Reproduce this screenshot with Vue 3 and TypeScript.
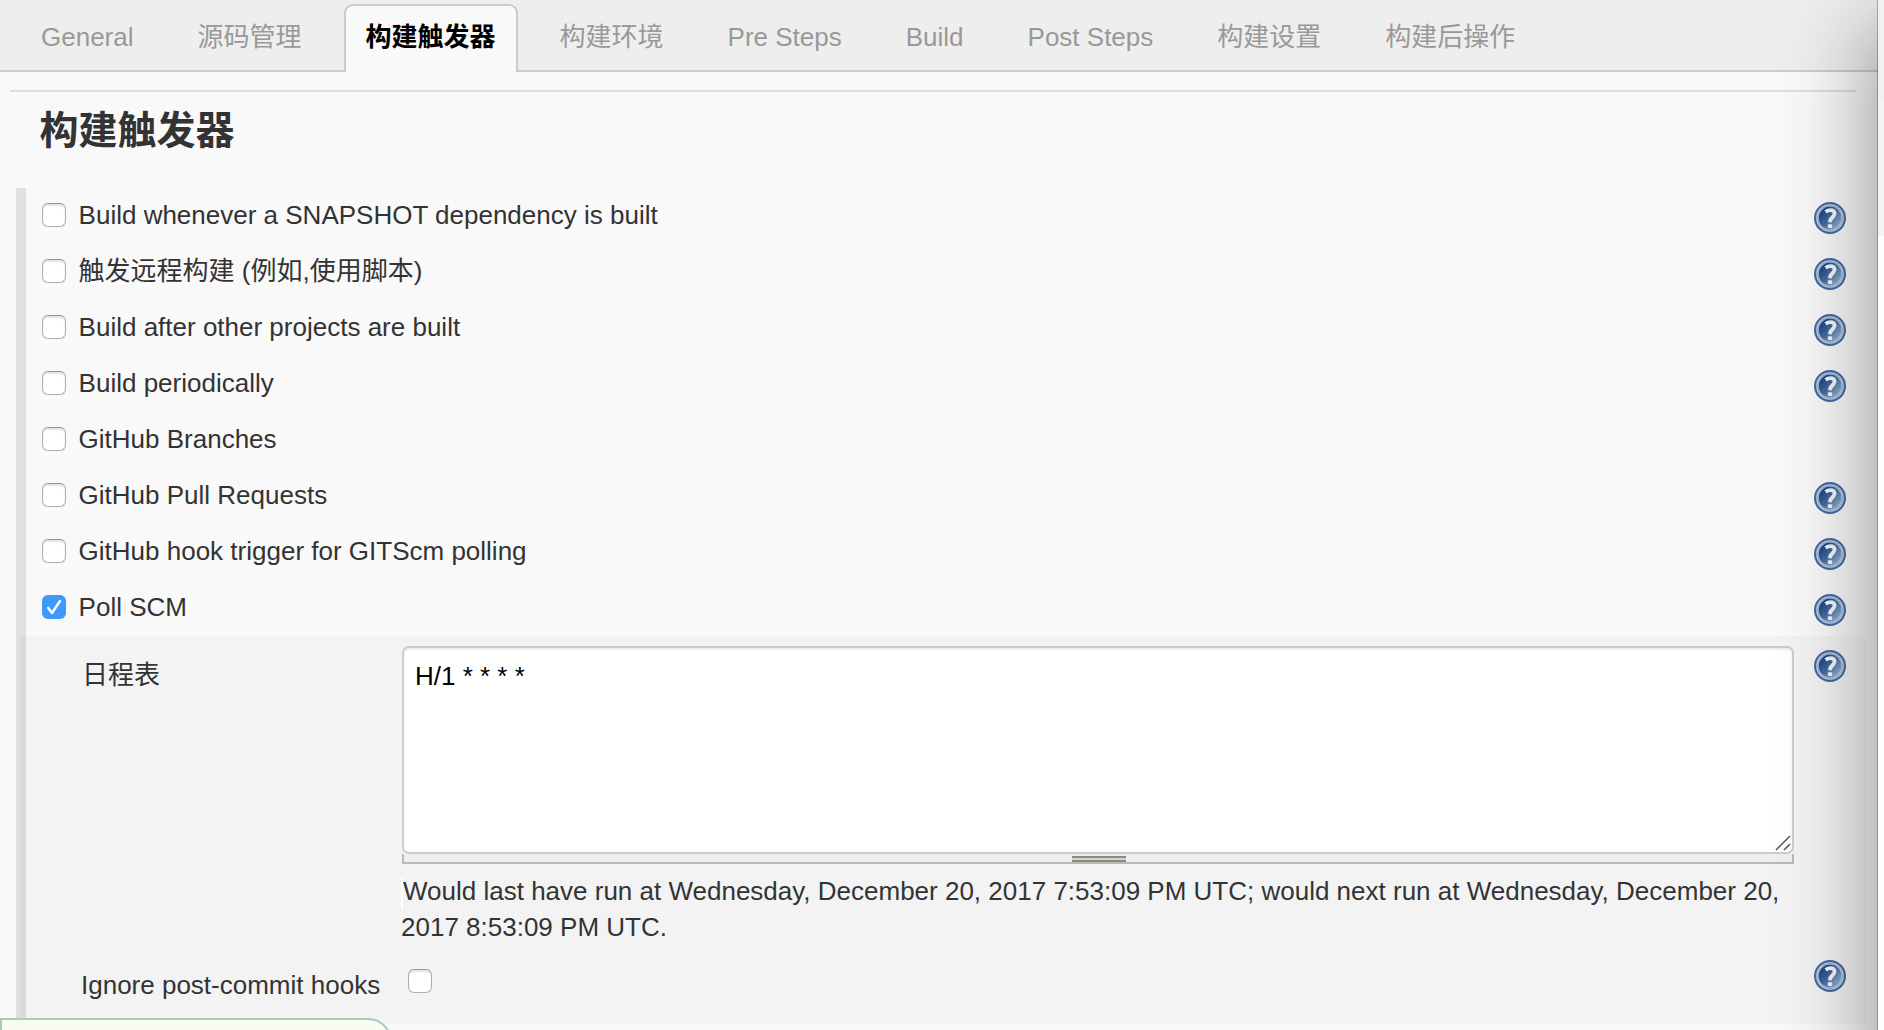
<script setup lang="ts">
import { ref } from 'vue'

interface Trigger {
  label: string
  checked: boolean
  help: boolean
}

const tabs: string[] = [
  'General',
  '源码管理',
  '构建触发器',
  '构建环境',
  'Pre Steps',
  'Build',
  'Post Steps',
  '构建设置',
  '构建后操作',
]
const activeTab = ref(2)

const triggers = ref<Trigger[]>([
  { label: 'Build whenever a SNAPSHOT dependency is built', checked: false, help: true },
  { label: '触发远程构建 (例如,使用脚本)', checked: false, help: true },
  { label: 'Build after other projects are built', checked: false, help: true },
  { label: 'Build periodically', checked: false, help: true },
  { label: 'GitHub Branches', checked: false, help: false },
  { label: 'GitHub Pull Requests', checked: false, help: true },
  { label: 'GitHub hook trigger for GITScm polling', checked: false, help: true },
  { label: 'Poll SCM', checked: true, help: true },
])

const schedule = ref('H/1 * * * *')
const ignoreHooks = ref(false)
</script>

<template>
  <div class="page">
    <svg class="defs" width="0" height="0" aria-hidden="true">
      <defs>
        <linearGradient id="disc" x1="0.1" y1="0.2" x2="0.9" y2="0.9">
          <stop offset="0" stop-color="#1f4583" />
          <stop offset="0.45" stop-color="#41699f" />
          <stop offset="1" stop-color="#9bb8d6" />
        </linearGradient>
        <symbol id="help" viewBox="0 0 32 32">
          <circle cx="16" cy="16" r="16" fill="#4469a3" />
          <circle cx="16" cy="16" r="13.8" fill="#d3dded" />
          <circle cx="16" cy="16" r="12.7" fill="#7f9ac2" />
          <circle cx="16" cy="16" r="12.1" fill="#c9d6e9" />
          <circle cx="16" cy="16" r="11.4" fill="url(#disc)" />
          <path d="M11.6 9.9C13.6 8.5 15 8.1 16.6 8.1c2.4 0 4 1.4 4 3.5 0 3.6-4.7 3.9-4.7 8.6" fill="none" stroke="#f2f5fa" stroke-width="3.9" />
          <rect x="13.8" y="22.2" width="4.4" height="3.9" rx="0.8" fill="#f2f5fa" />
        </symbol>
      </defs>
    </svg>

    <nav class="tabs">
      <a
        v-for="(tab, i) in tabs"
        :key="tab"
        class="tab"
        :class="{ active: i === activeTab }"
        @click="activeTab = i"
      >{{ tab }}</a>
    </nav>

    <main class="content">
      <h1 class="title">构建触发器</h1>

      <section class="group">
        <div v-for="t in triggers" :key="t.label" class="row">
          <label class="option">
            <input v-model="t.checked" type="checkbox" class="hidden-input" />
            <span class="box" :class="{ on: t.checked }">
              <svg v-if="t.checked" viewBox="0 0 24 24" width="24" height="24">
                <path d="M6.2 13l3.8 5 8-12" fill="none" stroke="#fff" stroke-width="2.4" stroke-linecap="round" stroke-linejoin="round" />
              </svg>
            </span>
            <span>{{ t.label }}</span>
          </label>
          <svg v-if="t.help" class="help"><use href="#help" /></svg>
        </div>

        <div class="nested">
          <div class="field">
            <div class="name">日程表</div>
            <div class="setting">
              <div class="area-wrap">
                <textarea v-model="schedule" class="area" spellcheck="false"></textarea>
                <svg class="corner" viewBox="0 0 16 16" width="16" height="16">
                  <path d="M1 15L15 1M9 15l6-6" stroke="#555" stroke-width="1.5" />
                </svg>
              </div>
              <div class="handle"><span class="grip"></span></div>
              <p class="note"><i class="spacer"></i>Would last have run at Wednesday, December 20, 2017 7:53:09 PM UTC; would next run at Wednesday, December 20, <br />2017 8:53:09 PM UTC.</p>
            </div>
            <svg class="help"><use href="#help" /></svg>
          </div>

          <div class="field ignore">
            <div class="name">Ignore post-commit hooks</div>
            <label class="setting">
              <input v-model="ignoreHooks" type="checkbox" class="hidden-input" />
              <span class="box"></span>
            </label>
            <svg class="help"><use href="#help" /></svg>
          </div>
        </div>
      </section>
    </main>

    <div class="save-bar"></div>
    <div class="shade"><div class="edge"></div></div>
  </div>
</template>

<style>
body {
  margin: 0;
  overflow: hidden;
}
</style>

<style scoped>
.page {
  position: relative;
  width: 1884px;
  height: 1030px;
  overflow: hidden;
  box-sizing: border-box;
  background: #f9f9f9;
  color: #333;
  font: 26px/36px "Liberation Sans", "Noto Sans CJK SC", sans-serif;
}
.page * {
  box-sizing: border-box;
}
.defs {
  position: absolute;
}
.tabs {
  display: flex;
  align-items: flex-end;
  gap: 20px;
  height: 72px;
  padding-left: 19px;
  background: linear-gradient(#ccc, #ccc) bottom / 100% 2px no-repeat #eee;
}
.tab {
  height: 68px;
  padding: 13px 20px 0;
  border: 2px solid transparent;
  border-bottom: 0;
  border-radius: 9px 9px 0 0;
  color: #999;
  white-space: nowrap;
}
.tab.active {
  border-color: #ccc;
  background: #f9f9f9;
  color: #000;
  font-weight: bold;
}
.content {
  width: 1846px;
  margin: 18px 0 0 10px;
  border-top: 2px solid #ddd;
}
.title {
  height: 96px;
  margin: 0;
  padding: 13px 0 0 29.5px;
  font-size: 39px;
  line-height: 52px;
}
.group {
  width: 1850px;
  margin-left: 6px;
  height: 836px;
  background: linear-gradient(#e0e0e0, #e0e0e0) left / 10px 100% no-repeat;
}
.row {
  display: flex;
  justify-content: space-between;
  height: 56px;
  padding: 14px 20px 0 26px;
}
.option {
  display: flex;
  align-items: flex-start;
  gap: 12.6px;
  height: 32px;
  line-height: 26px;
}
.hidden-input {
  display: none;
}
.box {
  display: block;
  flex: none;
  width: 24px;
  height: 24px;
  margin-top: 1px;
  border: 1px solid #b0b0b0;
  border-top-color: #959595;
  border-radius: 6px;
  background: #fff;
  box-shadow: inset 0 2px 2px #e4e4e4;
}
.box.on {
  border: 0;
  background: #3d99fb;
  box-shadow: none;
}
.box svg {
  display: block;
}
.help {
  flex: none;
  width: 32px;
  height: 32px;
}
.nested {
  width: 1846px;
  height: 388px;
  margin-left: 4px;
  background: rgba(0, 0, 0, 0.025);
}
.field {
  display: flex;
  height: 310px;
  padding: 14px 20px 0 62px;
}
.name {
  width: 320px;
  padding-top: 7px;
}
.setting {
  width: 1392px;
  margin-right: 20px;
}
.area-wrap {
  position: relative;
  height: 208px;
  margin-top: -4px;
}
.area {
  display: block;
  width: 100%;
  height: 100%;
  margin: 0;
  padding: 10px 11px;
  border: 2px solid #ccc;
  border-radius: 7px;
  outline: 0;
  resize: none;
  overflow: hidden;
  background: #fff;
  box-shadow: inset 0 2px 2px rgba(0, 0, 0, 0.07);
  color: #000;
  font: inherit;
}
.corner {
  position: absolute;
  right: 3px;
  bottom: 3px;
}
.handle {
  display: flex;
  justify-content: center;
  height: 10px;
  padding: 2px 0 0 2px;
  border: 2px solid #babbb2;
  border-top: 0;
  background: #eee;
}
.grip {
  width: 54px;
  height: 6px;
  background: linear-gradient(#8b8b83 0 2px, #d3d4cd 2px 4px, #8b8b83 4px 6px);
}
.note {
  margin: 10px 0 0 -1px;
  line-height: 35.5px;
  white-space: nowrap;
}
.spacer {
  display: inline-block;
  width: 2px;
  height: 32px;
  margin: 0;
  background: #fff;
  vertical-align: -10px;
}
.ignore {
  height: 78px;
}
.ignore .name {
  width: 326px;
  padding-top: 7px;
  text-indent: -1px;
}
.ignore .setting {
  width: 1386px;
  padding-top: 8px;
}
.save-bar {
  position: absolute;
  left: 0;
  top: 1018px;
  width: 392px;
  height: 40px;
  border: 2px solid #a9cbb9;
  border-radius: 0 24px 0 0;
  background: rgba(247, 252, 241, 0.93);
}
.shade {
  position: absolute;
  right: 0;
  top: 0;
  width: 124px;
  height: 1030px;
  overflow: hidden;
  pointer-events: none;
}
.edge {
  position: absolute;
  left: 118px;
  top: -20px;
  width: 400px;
  height: 1400px;
  background: linear-gradient(#f4f0ef 0 120px, #f4f4f3 120px 256px, #fdfdfd 256px);
  box-shadow: 0 0 0 1px rgba(0, 0, 0, 0.25), 0 50px 84px 5px rgba(0, 0, 0, 0.42);
}
</style>
